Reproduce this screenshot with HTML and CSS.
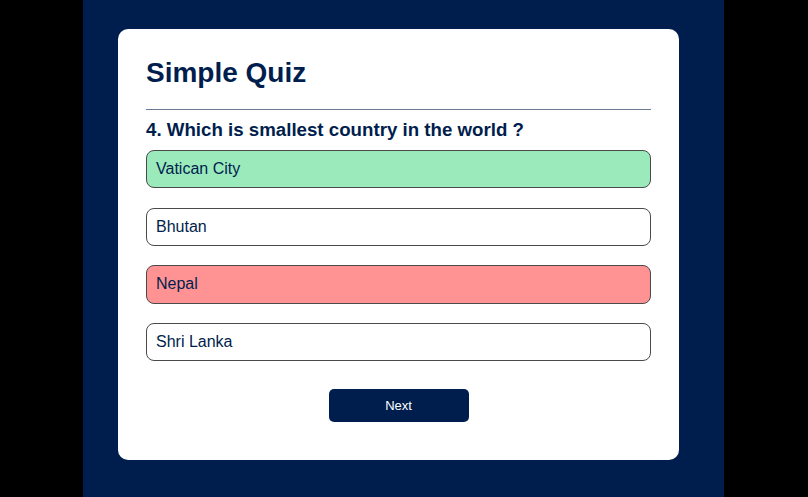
FILE: index.html
```html
<!DOCTYPE html>
<html>
<head>
<meta charset="utf-8">
<link rel="stylesheet" href="styles.css">
</head>
<body>
<div class="app">
  <div class="card">
    <h1 class="title">Simple Quiz</h1>
    <div class="quiz">
      <h2 class="question">4. Which is smallest country in the world ?</h2>
      <div class="answers">
        <button class="answer correct">Vatican City</button>
        <button class="answer">Bhutan</button>
        <button class="answer incorrect">Nepal</button>
        <button class="answer">Shri Lanka</button>
      </div>
      <button class="next">Next</button>
    </div>
  </div>
</div>
</body>
</html>
```

FILE: styles.css
```css
* { box-sizing: border-box; }
html, body { margin: 0; padding: 0; }
body {
  background: #000;
  font-family: "Liberation Sans", Arial, sans-serif;
  height: 497px;
  overflow: hidden;
}
.app {
  width: 641px;
  margin-left: 83px;
  height: 497px;
  background: #001e4d;
  padding-top: 29px;
}
.card {
  width: 561px;
  margin-left: 35px;
  background: #fff;
  border-radius: 10px;
  padding: 28px 28px 38px;
  height: 431px;
}
.title {
  margin: 0;
  font-size: 28px;
  font-weight: bold;
  color: #001e4d;
  padding-bottom: 20px;
  border-bottom: 1px solid #6d7c96;
}
.question {
  margin: 9px 0 9px;
  font-size: 18.7px;
  font-weight: bold;
  color: #001e4d;
}
.answers {
  display: flex;
  flex-direction: column;
  gap: 19.2px;
}
.answer {
  display: block;
  width: 100%;
  text-align: left;
  font-family: "Liberation Sans", Arial, sans-serif;
  font-size: 16px;
  color: #001e4d;
  background: #fff;
  border: 1px solid #4a4a4a;
  border-radius: 8px;
  padding: 9px 9px;
  line-height: 18.4px;
}
.answer.correct { background: #9aeabc; }
.answer.incorrect { background: #ff9393; }
.next {
  display: block;
  margin: 28px auto 0;
  width: 140px;
  height: 33px;
  background: #001e4d;
  color: #fff;
  border: none;
  border-radius: 5px;
  font-family: "Liberation Sans", Arial, sans-serif;
  font-size: 13px;
}
```
